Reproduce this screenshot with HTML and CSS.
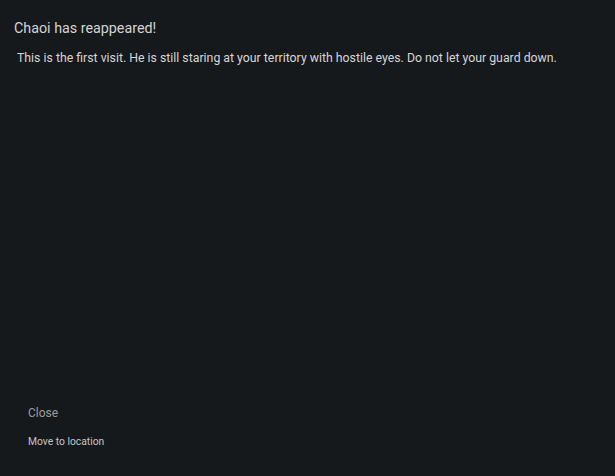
FILE: index.html
```html
<!DOCTYPE html>
<html>
<head>
<meta charset="utf-8">
<link rel="stylesheet" href="styles.css">
</head>
<body>
<div class="dialog">
  <div class="content">
    <h1 class="title">Chaoi has reappeared!</h1>
    <p class="message">This is the first visit. He is still staring at your territory with hostile eyes. Do not let your guard down.</p>
  </div>
  <div class="actions">
    <div class="action close">Close</div>
    <div class="action move">Move to location</div>
  </div>
</div>
</body>
</html>
```
FILE: styles.css
```css
html, body {
  margin: 0;
  padding: 0;
  height: 100%;
  background: #16191c;
}
body {
  font-family: Roboto, "Noto Sans", sans-serif;
}
.dialog {
  height: 476px;
  display: flex;
  flex-direction: column;
  justify-content: space-between;
  box-sizing: border-box;
}
.content {
  padding: 19px 14px 0 14px;
}
.title {
  margin: 0;
  font-size: 14.3px;
  font-weight: 400;
  color: #d4d4d4;
  line-height: 18px;
}
.message {
  margin: 13px 0 0 3px;
  font-size: 12.3px;
  color: #d6d6d6;
  line-height: 16px;
}
.actions {
  display: flex;
  flex-direction: column;
  gap: 13px;
  padding: 0 0 26px 28px;
}
.action {
  line-height: 16px;
}
.close {
  font-size: 12px;
  color: #9c9c9c;
}
.move {
  font-size: 10.3px;
  color: #c4c4c4;
}
```
